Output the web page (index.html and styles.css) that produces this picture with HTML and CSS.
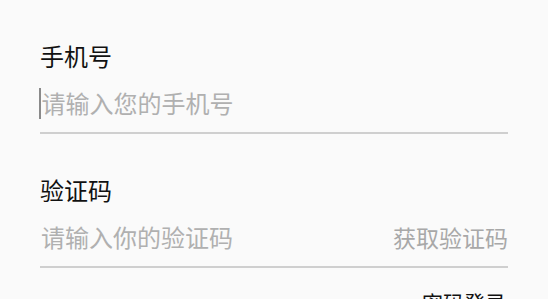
FILE: index.html
```html
<!doctype html>
<html lang="zh-CN">
    <head>
        <meta charset="UTF-8" />
        <meta name="viewport" content="width=device-width, initial-scale=1.0" />
        <title>登录</title>
        <link rel="stylesheet" href="styles.css">
    </head>
    <body>
        <form class="login-form">
            <div class="field">
                <label class="field-label" for="phone">手机号</label>
                <div class="field-row">
                    <span class="caret"></span>
                    <input id="phone" class="field-input" type="tel" placeholder="请输入您的手机号">
                </div>
            </div>

            <div class="field">
                <label class="field-label" for="code">验证码</label>
                <div class="field-row">
                    <input id="code" class="field-input" type="text" placeholder="请输入你的验证码">
                    <button type="button" class="code-button">获取验证码</button>
                </div>
            </div>

            <div class="switch-mode">
                <a href="#">密码登录</a>
            </div>
        </form>
    </body>
</html>
```

FILE: styles.css
```css
:root {
    --background-color: #fafafa;
    --text-color: #111111;
    --hint-color: #b0b0b0;
    --line-color: #cfcfcf;
}

body {
    font-family: "Noto Sans CJK SC", "Noto Sans", sans-serif;
    margin: 0;
    padding: 0;
    background-color: var(--background-color);
    color: var(--text-color);
}

.login-form {
    padding: 40px 40px 0;
}

.field {
    margin-bottom: 40px;
}

.field-label {
    display: block;
    font-size: 24px;
    line-height: 32px;
}

.field-row {
    display: flex;
    align-items: center;
    height: 40px;
    margin-top: 11px;
    padding-bottom: 9px;
    border-bottom: 2px solid var(--line-color);
}

.caret {
    width: 1.5px;
    height: 31px;
    margin-left: -1px;
    background-color: #8a8a8a;
}

.field-input {
    flex: 1;
    min-width: 0;
    border: none;
    outline: none;
    background: transparent;
    padding: 0 0 0 1px;
    font-family: inherit;
    font-size: 24px;
    line-height: 40px;
    color: var(--text-color);
}

.field-input::placeholder {
    color: var(--hint-color);
}

.code-button {
    border: none;
    background: transparent;
    padding: 0;
    font-family: inherit;
    font-size: 23px;
    color: #a8a8a8;
}

.switch-mode {
    margin-top: -22px;
    text-align: right;
    padding-right: 2px;
}

.switch-mode a {
    font-size: 21px;
    line-height: 32px;
    color: var(--text-color);
    text-decoration: none;
}
```
